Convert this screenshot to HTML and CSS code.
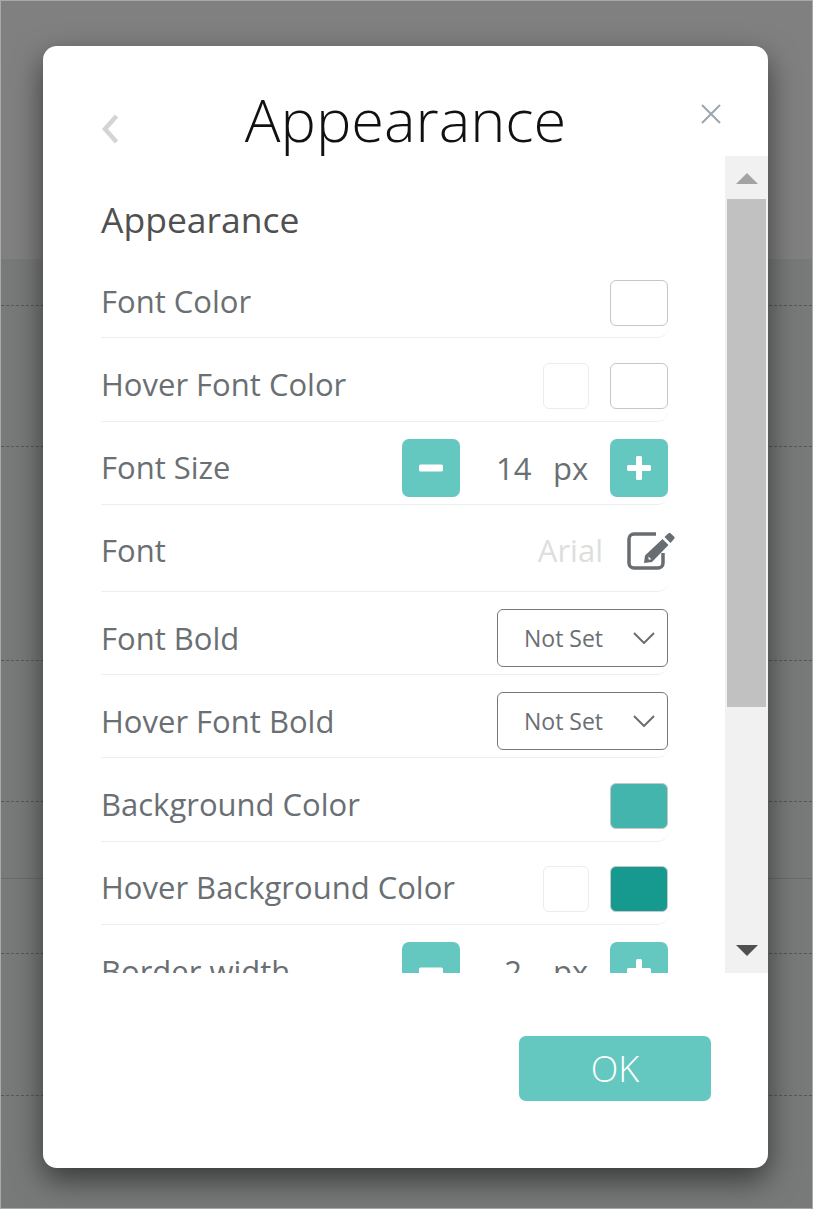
FILE: index.html
```html
<!DOCTYPE html>
<html lang="en">
<head>
    <meta charset="UTF-8">
    <meta name="viewport" content="width=device-width, initial-scale=1.0">
    <title>Appearance</title>
    <link rel="stylesheet" href="styles.css">
</head>
<body>
    <div class="page">
        <div class="page-band"></div>
        <div class="page-line h46"></div>
        <div class="page-line h141"></div>
        <div class="page-line h214"></div>
        <div class="page-line h141"></div>
        <div class="page-line solid h77"></div>
        <div class="page-line h75"></div>
        <div class="page-line h142"></div>
    </div>

    <div class="modal">
        <div class="modal-head">
            <svg class="back" width="20" height="30" viewBox="0 0 20 30"><path d="M16.500 2 5 15l11.500 13"/></svg>
            <h1>Appearance</h1>
            <svg class="close" width="20" height="20" viewBox="0 0 20 20"><path d="M1 1l18 18M19 1 1 19"/></svg>
        </div>

        <div class="modal-body">
            <div class="scroll-content">
                <h2>Appearance</h2>

                <div class="row">
                    <span class="label">Font Color</span>
                    <div class="swatch"></div>
                </div>
                <div class="row">
                    <span class="label">Hover Font Color</span>
                    <div class="swatch faint"></div>
                    <div class="swatch"></div>
                </div>
                <div class="row">
                    <span class="label">Font Size</span>
                    <div class="stepper">
                        <button class="step"><svg width="24" height="24" viewBox="0 0 24 24"><rect x="0" y="8.500" width="24" height="7" rx="1.500"/></svg></button>
                        <span class="value">14</span>
                        <span class="unit">px</span>
                        <button class="step"><svg width="24" height="24" viewBox="0 0 24 24"><path d="M9 1.500A1.500 1.500 0 0 1 10.500 0h3A1.500 1.500 0 0 1 15 1.500V9h7.500A1.500 1.500 0 0 1 24 10.500v3a1.500 1.500 0 0 1-1.500 1.500H15v7.500a1.500 1.500 0 0 1-1.500 1.500h-3A1.500 1.500 0 0 1 9 22.500V15H1.500A1.500 1.500 0 0 1 0 13.500v-3A1.500 1.500 0 0 1 1.500 9H9z"/></svg></button>
                    </div>
                </div>
                <div class="row tall">
                    <span class="label">Font</span>
                    <span class="font-name">Arial</span>
                    <svg class="edit" width="48" height="38" viewBox="0 0 48 38">
                        <path class="edit-box" d="M29 2H7a5 5 0 0 0-5 5v24a5 5 0 0 0 5 5h24a5 5 0 0 0 5-5V21"/>
                        <path class="edit-pen" d="M17 31l1-7.500L35.500 7l6 6L25 30zM21.500 24.500v3h3z"/>
                        <path class="edit-pen" d="M37.500 5l4-3.700a1.500 1.500 0 0 1 2 0l3.700 3.400a1.500 1.500 0 0 1 0 2L43.500 11z"/>
                    </svg>
                </div>
                <div class="row">
                    <span class="label">Font Bold</span>
                    <div class="select">
                        <span>Not Set</span>
                        <svg width="22" height="12" viewBox="0 0 22 12"><path d="M1 1l10 10L21 1"/></svg>
                    </div>
                </div>
                <div class="row">
                    <span class="label">Hover Font Bold</span>
                    <div class="select">
                        <span>Not Set</span>
                        <svg width="22" height="12" viewBox="0 0 22 12"><path d="M1 1l10 10L21 1"/></svg>
                    </div>
                </div>
                <div class="row">
                    <span class="label">Background Color</span>
                    <div class="swatch teal"></div>
                </div>
                <div class="row">
                    <span class="label">Hover Background Color</span>
                    <div class="swatch faint"></div>
                    <div class="swatch dark-teal"></div>
                </div>
                <div class="row">
                    <span class="label">Border width</span>
                    <div class="stepper">
                        <button class="step"><svg width="24" height="24" viewBox="0 0 24 24"><rect x="0" y="8.500" width="24" height="7" rx="1.500"/></svg></button>
                        <span class="value">2</span>
                        <span class="unit">px</span>
                        <button class="step"><svg width="24" height="24" viewBox="0 0 24 24"><path d="M9 1.500A1.500 1.500 0 0 1 10.500 0h3A1.500 1.500 0 0 1 15 1.500V9h7.500A1.500 1.500 0 0 1 24 10.500v3a1.500 1.500 0 0 1-1.500 1.500H15v7.500a1.500 1.500 0 0 1-1.500 1.500h-3A1.500 1.500 0 0 1 9 22.500V15H1.500A1.500 1.500 0 0 1 0 13.500v-3A1.500 1.500 0 0 1 1.500 9H9z"/></svg></button>
                    </div>
                </div>
            </div>

            <div class="scrollbar">
                <div class="arrow-box top"><div class="arrow-up"></div></div>
                <div class="thumb"></div>
                <div class="arrow-box bottom"><div class="arrow-down"></div></div>
            </div>
        </div>

        <div class="modal-foot">
            <button class="ok">OK</button>
        </div>
    </div>
</body>
</html>
```

FILE: styles.css
```css
* {
    box-sizing: border-box;
}

body {
    margin: 0;
    height: 1209px;
    overflow: hidden;
    background-color: #7f8080;
    border: 1px solid #a9a9a9;
    font-family: "Open Sans", sans-serif;
}

.page-band {
    height: 258px;
    background-color: #808080;
}

.page {
    background-color: #787a79;
    height: 100%;
}

.page-line {
    border-bottom: 1px dashed #565858;
}

.page-line.solid {
    border-bottom: 1px solid #6a6c6b;
}

.h46 { height: 47px; }
.h75 { height: 75px; }
.h77 { height: 77px; }
.h141 { height: 141px; }
.h142 { height: 142px; }
.h214 { height: 214px; }

.modal {
    position: absolute;
    top: 46px;
    left: 43px;
    width: 725px;
    height: 1122px;
    background-color: #fff;
    border-radius: 14px;
    box-shadow: 0 12px 30px rgba(0, 0, 0, 0.55);
    overflow: hidden;
}

.modal-head {
    height: 110px;
    display: grid;
    grid-template-columns: 100px 1fr 100px;
    align-items: center;
}

.modal-head h1 {
    margin: 36px 0 0;
    font-size: 59.500px;
    font-weight: 300;
    line-height: 1;
    text-align: center;
    color: #111;
}

.back {
    margin-left: 57px;
    margin-top: 55px;
}

.back path {
    fill: none;
    stroke: #d4d4d4;
    stroke-width: 4.500;
}

.close {
    margin-left: 32.500px;
    margin-top: 25px;
}

.close path {
    fill: none;
    stroke: #9ba6ad;
    stroke-width: 2;
}

.modal-body {
    display: flex;
    height: 817px;
}

.scroll-content {
    flex: 1;
    padding: 0 57px 0 58px;
    overflow: hidden;
}

h2 {
    margin: 0;
    padding-top: 38px;
    height: 99px;
    font-size: 35.500px;
    font-weight: 400;
    line-height: 50px;
    color: #505050;
}

.row {
    display: flex;
    align-items: center;
    justify-content: flex-end;
    gap: 21px;
    height: 83.250px;
    padding-top: 13.500px;
    border-bottom: 1px solid #eee;
    border-radius: 0 0 10px 0;
}

.row.tall {
    height: 87px;
    padding-top: 6px;
}

.row.tall .label {
    margin-top: -1px;
}

.label {
    margin-right: auto;
    margin-top: -4px;
    font-size: 31px;
    color: #6a6f73;
}

.swatch {
    width: 58px;
    height: 46px;
    background-color: #fff;
    border: 1px solid #c6c6c6;
    border-radius: 6px;
}

.swatch.faint {
    width: 46px;
    border-color: #ececec;
}

.swatch.teal {
    background-color: #44b5ac;
}

.swatch.dark-teal {
    background-color: #169a90;
}

.stepper {
    display: flex;
    align-items: center;
    width: 266px;
    margin-top: -3px;
}

.step {
    display: flex;
    align-items: center;
    justify-content: center;
    width: 58px;
    height: 58px;
    padding: 0;
    background-color: #64c8c0;
    border: 0;
    border-radius: 7px;
}

.step svg {
    fill: #fff;
}

.value,
.unit {
    font-size: 31px;
    color: #6a6f73;
}

.value {
    width: 34px;
    margin-left: 36px;
    text-align: center;
}

.unit {
    margin-left: 23px;
    margin-right: auto;
}

.font-name {
    font-size: 31px;
    color: #dedede;
    margin-right: 3px;
    margin-top: -1px;
}

.edit {
    margin-right: -7px;
}

.edit-box {
    fill: none;
    stroke: #686d72;
    stroke-width: 3.500;
}

.edit-pen {
    fill: #686d72;
    fill-rule: evenodd;
    stroke: none;
}

.select {
    display: flex;
    align-items: center;
    justify-content: space-between;
    width: 171px;
    height: 58px;
    margin-top: -4px;
    padding: 0 12px 0 26px;
    border: 1px solid #777;
    border-radius: 6px;
    font-size: 23px;
    color: #6a6f73;
}

.select svg {
    fill: none;
    stroke: #6a6f73;
    stroke-width: 2;
}

.scrollbar {
    display: flex;
    flex-direction: column;
    width: 43px;
    background-color: #f1f1f1;
}

.arrow-box {
    display: flex;
    justify-content: center;
}

.arrow-box.top {
    height: 43px;
    padding-top: 17px;
}

.arrow-box.bottom {
    flex: 1;
    align-items: flex-end;
    padding-bottom: 17px;
}

.arrow-up,
.arrow-down {
    width: 0;
    height: 0;
    border-left: 11px solid transparent;
    border-right: 11px solid transparent;
}

.arrow-up {
    border-bottom: 11px solid #a3a3a3;
}

.arrow-down {
    border-top: 11px solid #505050;
}

.thumb {
    height: 508px;
    margin: 0 2px;
    background-color: #c1c1c1;
}

.modal-foot {
    display: flex;
    justify-content: flex-end;
    padding: 63px 57px 0 0;
}

.ok {
    width: 192px;
    height: 65px;
    padding: 0;
    background-color: #64c8c0;
    border: 0;
    border-radius: 7px;
    font-family: "Open Sans", sans-serif;
    font-size: 36px;
    font-weight: 300;
    color: #fff;
}
```
